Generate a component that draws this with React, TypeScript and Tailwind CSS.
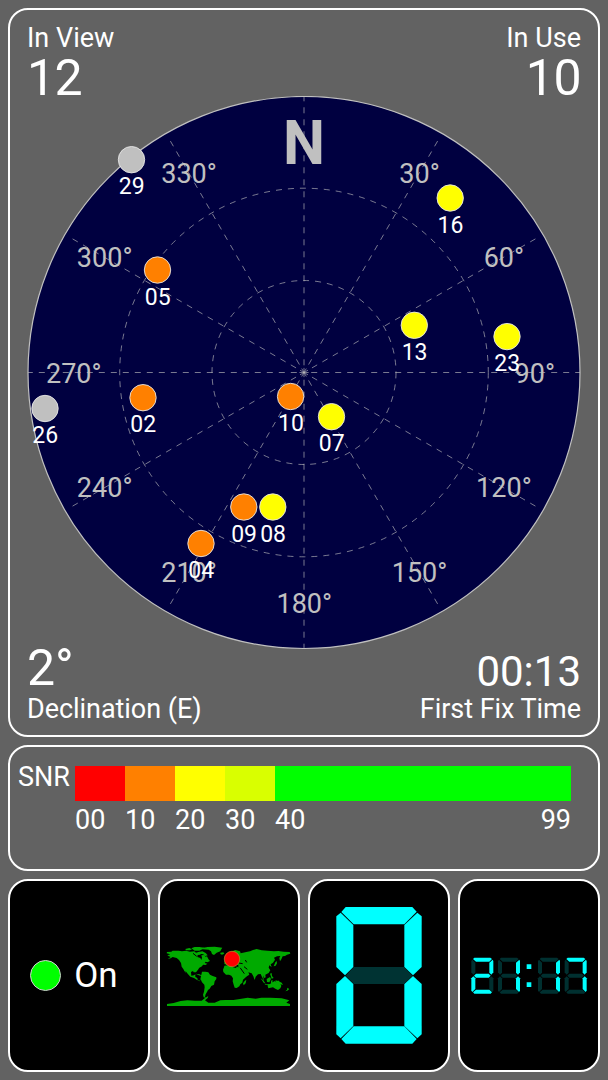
import React from "react";

const CX = 294;
const CY = 276.5;
const R = 276;

type Satellite = { id: string; x: number; y: number; color: string };

const GREY = "#c0c0c0";
const ORANGE = "#ff8000";
const YELLOW = "#ffff00";

const satellites: Satellite[] = [
  { id: "29", x: 121.5, y: 63.7, color: GREY },
  { id: "16", x: 440.2, y: 102, color: YELLOW },
  { id: "05", x: 147.5, y: 174, color: ORANGE },
  { id: "13", x: 404.3, y: 229.3, color: YELLOW },
  { id: "23", x: 497, y: 240.6, color: YELLOW },
  { id: "02", x: 133, y: 301.7, color: ORANGE },
  { id: "26", x: 35, y: 312.5, color: GREY },
  { id: "10", x: 280.6, y: 300.5, color: ORANGE },
  { id: "07", x: 321.5, y: 320.7, color: YELLOW },
  { id: "09", x: 233.8, y: 411, color: ORANGE },
  { id: "08", x: 262.8, y: 411, color: YELLOW },
  { id: "04", x: 191, y: 447.5, color: ORANGE },
];

const bearings = [30, 60, 90, 120, 150, 180, 210, 240, 270, 300, 330];

const snrSteps = [
  { label: "00", className: "w-[50px] bg-[#ff0000]" },
  { label: "10", className: "w-[50px] bg-[#ff8000]" },
  { label: "20", className: "w-[50px] bg-[#ffff00]" },
  { label: "30", className: "w-[50px] bg-[#d9ff00]" },
  { label: "40", className: "flex-1 bg-[#00ff00]" },
];

function Radar() {
  return (
    <svg className="block h-[554px] w-[588px] shrink-0" viewBox="0 0 588 554">
      <circle cx={CX} cy={CY} r={R} fill="#000040" stroke={GREY} strokeWidth="1.2" />
      <g stroke={GREY} fill="none">
        {Array.from({ length: 12 }, (_, i) => {
          const a = (i * Math.PI) / 6;
          const s = Math.sin(a);
          const c = -Math.cos(a);
          const diagonal = i % 3 !== 0;
          const length = diagonal ? 270 : R;
          return (
            <g key={i}>
              <line
                x1={CX + s * 7.2}
                y1={CY + c * 7.2}
                x2={CX + s * length}
                y2={CY + c * length}
                strokeWidth="0.85"
                strokeOpacity="0.75"
                strokeDasharray="6 6"
                strokeDashoffset={diagonal ? -2 : 0}
              />
              <line x1={CX} y1={CY} x2={CX + s * 4.6} y2={CY + c * 4.6} strokeWidth="0.8" strokeOpacity="0.75" />
            </g>
          );
        })}
        <circle cx={CX} cy={CY} r="92" strokeWidth="0.85" strokeOpacity="0.75" strokeDasharray="6 6" />
        <circle cx={CX} cy={CY} r="184.3" strokeWidth="0.85" strokeOpacity="0.75" strokeDasharray="6 6" />
      </g>
      <g fill={GREY} textAnchor="middle">
        <text x={CX} y="67.5" fontSize="61.5" fontWeight="700" textLength="42" lengthAdjust="spacingAndGlyphs">N</text>
        {bearings.map((b) => {
          const a = (b * Math.PI) / 180;
          const baseline = Math.cos(a) > -0.1 ? 10 : 9.6;
          return (
            <text key={b} x={CX + Math.sin(a) * 230.5 + 0.3} y={CY - Math.cos(a) * 230.5 + baseline} fontSize="27">
              {b}°
            </text>
          );
        })}
      </g>
      {satellites.map((s) => (
        <g key={s.id}>
          <circle cx={s.x} cy={s.y} r="13.2" fill={s.color} stroke="#e6e6e6" strokeWidth="0.9" />
          <text x={s.x + 0.3} y={s.y + 34.7} fontSize="23" fill="#fff" textAnchor="middle">{s.id}</text>
        </g>
      ))}
    </svg>
  );
}

function WorldMap() {
  return (
    <svg className="h-[80px] w-[138px]" viewBox="0 3 414 240">
      <g fill="#00aa00">
        <path d="M21 51 L34 50 L38 47 L56 47 L66 49 L78 47 L90 50 L103 49 L108 53 L118 50 L125 52 L121 59 L113 60 L112 66 L121 69 L124 75 L126 68 L124 61 L131 60 L137 65 L141 64 L145 72 L150 78 L142 82 L137 80 L134 84 L142 86 L137 90 L129 89 L126 94 L118 98 L114 104 L108 112 L101 112 L99 108 L93 111 L94 122 L102 121 L106 118 L106 126 L112 129 L113 135 L120 137 L119 139 L110 134 L102 129 L91 125 L83 116 L76 107 L78 114 L73 108 L70 102 L65 95 L63 84 L57 75 L50 69 L38 66 L32 70 L23 72 L32 66 L27 64 L22 61 L31 58 L20 55 Z" />
        <path d="M76 42 L88 39 L96 43 L90 46 L78 46 Z M94 40 L104 36 L118 36 L133 38 L129 42 L118 47 L104 47 Z M117 51 L127 49 L137 54 L143 61 L134 64 L130 58 L119 56 Z M101 39 L111 38 L108 45 Z" />
        <path d="M126 39 L143 36 L164 35 L187 38 L184 43 L181 49 L170 53 L162 60 L156 57 L153 49 L146 44 L128 43 Z M181 53 L190 52 L193 56 L186 59 L181 57 Z" />
        <path d="M120 137 L126 110 L136 110 L145 112 L150 119 L158 123 L169 127 L169 132 L164 139 L162 149 L154 153 L149 161 L144 165 L141 171 L137 178 L135 185 L139 189 L131 187 L129 179 L132 170 L134 157 L133 149 L126 142 L122 133 Z M107 116 L119 118 L126 122 L120 122 Z" />
        <path d="M193 92 L203 91 L214 90 L218 96 L227 99 L231 95 L243 98 L248 108 L253 117 L263 117 L258 126 L249 134 L247 143 L241 148 L238 154 L230 159 L224 158 L221 149 L218 139 L219 130 L214 122 L207 119 L198 119 L190 111 L189 104 L192 97 Z M254 138 L259 134 L257 145 L251 151 L249 145 Z" />
        <path d="M193 87 L194 79 L201 78 L203 69 L210 66 L216 57 L208 58 L213 50 L226 45 L240 49 L242 55 L249 53 L259 51 L270 49 L279 45 L290 42 L305 46 L322 47 L342 49 L355 48 L371 50 L389 51 L391 56 L381 59 L375 63 L368 64 L364 73 L360 79 L358 69 L361 63 L351 64 L342 68 L345 74 L339 83 L332 88 L335 97 L328 91 L326 98 L331 106 L326 114 L316 119 L317 127 L313 129 L309 121 L312 138 L305 124 L302 117 L294 118 L287 125 L284 135 L280 124 L275 115 L265 112 L268 119 L257 126 L251 124 L244 108 L242 99 L235 97 L235 90 L225 86 L230 96 L220 89 L209 83 L200 89 Z M195 63 L199 60 L204 72 L197 75 Z M341 94 L346 82 L350 78 L351 85 L347 92 Z" />
        <path d="M302 130 L310 136 L317 146 L311 143 Z M320 132 L330 126 L333 132 L328 142 L321 141 Z M333 137 L338 135 L337 144 L333 144 Z M314 147 L328 148 L337 149 L336 151 L316 149 Z M346 136 L355 138 L365 143 L369 150 L359 147 L350 144 Z M330 116 L335 114 L336 123 L341 129 L335 131 Z" />
        <path d="M323 149 L330 147 L337 142 L345 138 L352 143 L355 136 L360 144 L364 153 L361 160 L354 165 L346 161 L339 157 L325 160 L323 153 Z M382 158 L388 162 L382 167 L376 169 L381 164 Z" />
        <path d="M21 207 L41 204 L54 200 L62 198 L82 196 L105 197 L125 197 L134 190 L145 183 L143 189 L135 196 L145 203 L164 203 L181 196 L197 195 L220 195 L240 192 L263 188 L287 191 L304 188 L331 188 L365 190 L388 196 L379 203 L390 207 L390 213 L21 213 Z" />
      </g>
      <g stroke="#000" strokeWidth="3" fill="none">
        <path d="M236 84 L248 86 M256 75 L260 82 M241 99 L253 116 M252 95 L262 103 M99 55 L110 64" />
      </g>
      <circle cx="216" cy="72" r="23.2" fill="#f00" stroke="#b89030" strokeWidth="2" />
    </svg>
  );
}

function BigDigit() {
  return (
    <svg className="h-[189px] w-[138px]" viewBox="0 3 414 567">
      <g fill="#0ff">
        <path d="M107 81 H307 L320 95 L283 133 H131 L94 96 Z" />
        <path d="M92 98 L130 135 V261 L105 286 L79 261 V109 Z" />
        <path d="M322 98 L335 109 V261 L309 286 L283 261 V135 Z" />
        <path d="M105 288 L130 312 V438 L92 475 L79 463 V312 Z" />
        <path d="M309 288 L335 312 V463 L322 475 L283 438 V312 Z" />
        <path d="M131 439 H283 L320 477 L307 491 H107 L94 477 Z" />
      </g>
      <path d="M107 287 L131 261 H283 L308 287 L283 312 H131 Z" fill="#003333" />
    </svg>
  );
}

const segments: Record<string, string> = {
  a: "M9 0 H57 L62 4 L54 12 H14 L5 4 Z",
  b: "M64 6 L66 10 V44 L60 51 L54 45 V15 Z",
  c: "M60 56 L66 62 V99 L63 103 L54 94 V62 Z",
  d: "M14 96 H54 L62 104 L58 108 H9 L5 104 Z",
  e: "M6 56 L12 62 V94 L3 103 L0 99 V62 Z",
  f: "M3 6 L12 15 V45 L6 51 L0 44 V10 Z",
  g: "M8 54 L14 48 H52 L58 54 L52 60 H14 Z",
};

const clockDigits = [
  { x: 34, on: "abged" },
  { x: 114, on: "bc" },
  { x: 234, on: "bc" },
  { x: 314, on: "abc" },
];

function Clock() {
  return (
    <svg className="h-[70px] w-[138px]" viewBox="0 2 414 210">
      {clockDigits.map((d) => (
        <g key={d.x} transform={`translate(${d.x} 52)`}>
          {Object.keys(segments).map((k) => (
            <path key={k} d={segments[k]} fill={d.on.includes(k) ? "#0ff" : "#003030"} />
          ))}
        </g>
      ))}
      <path d="M200 72 h14 v14 h-14 Z M200 126 h14 v14 h-14 Z" fill="#0ff" />
    </svg>
  );
}

function Tile({ children }: { children: React.ReactNode }) {
  return (
    <div className="flex items-center justify-center overflow-hidden rounded-[20px] border-2 border-white bg-black">
      {children}
    </div>
  );
}

export default function App() {
  return (
    <main className="flex h-[1080px] w-[608px] flex-col gap-2 overflow-hidden bg-[#626262] p-2 font-['Roboto',sans-serif] text-white">
      <section className="flex h-[729px] flex-col rounded-[20px] border-2 border-white">
        <header className="flex h-[86px] shrink-0 justify-between px-[17px] pt-3">
          <div>
            <div className="text-[27px] leading-8">In View</div>
            <div className="text-[50px] leading-[48px] tracking-[-0.5px]">12</div>
          </div>
          <div className="text-right">
            <div className="text-[27px] leading-8">In Use</div>
            <div className="text-[50px] leading-[48px] tracking-[-0.5px]">10</div>
          </div>
        </header>
        <Radar />
        <footer className="flex flex-1 items-end justify-between px-[17px] pb-[10px]">
          <div>
            <div className="mb-[6px] text-[50px] leading-[37px]">2°</div>
            <div className="text-[27px] leading-8 tracking-[-0.05px]">Declination (E)</div>
          </div>
          <div className="text-right">
            <div className="text-[42px] leading-[43px]">00:13</div>
            <div className="text-[27px] leading-8 tracking-[-0.05px]">First Fix Time</div>
          </div>
        </footer>
      </section>

      <section className="flex h-[126px] rounded-[20px] border-2 border-white pl-2 pr-[27px] pt-[19px]">
        <div className="w-[57px] text-[27px] leading-[22px]">SNR</div>
        <div className="flex-1">
          <div className="flex h-[35px]">
            {snrSteps.map((s) => (
              <div key={s.label} className={s.className} />
            ))}
          </div>
          <div className="flex pt-[3px] text-[27px] leading-8">
            {snrSteps.map((s) => (
              <span key={s.label} className="w-[50px]">{s.label}</span>
            ))}
            <span className="ml-auto">99</span>
          </div>
        </div>
      </section>

      <section className="grid h-[193px] grid-cols-4 gap-2">
        <Tile>
          <div className="flex items-center gap-[13px] pr-[10px]">
            <span className="size-[31px] rounded-full border border-[#d0d0d0] bg-[#00ff00]" />
            <span className="text-[35px] leading-10">On</span>
          </div>
        </Tile>
        <Tile>
          <WorldMap />
        </Tile>
        <Tile>
          <BigDigit />
        </Tile>
        <Tile>
          <Clock />
        </Tile>
      </section>
    </main>
  );
}
